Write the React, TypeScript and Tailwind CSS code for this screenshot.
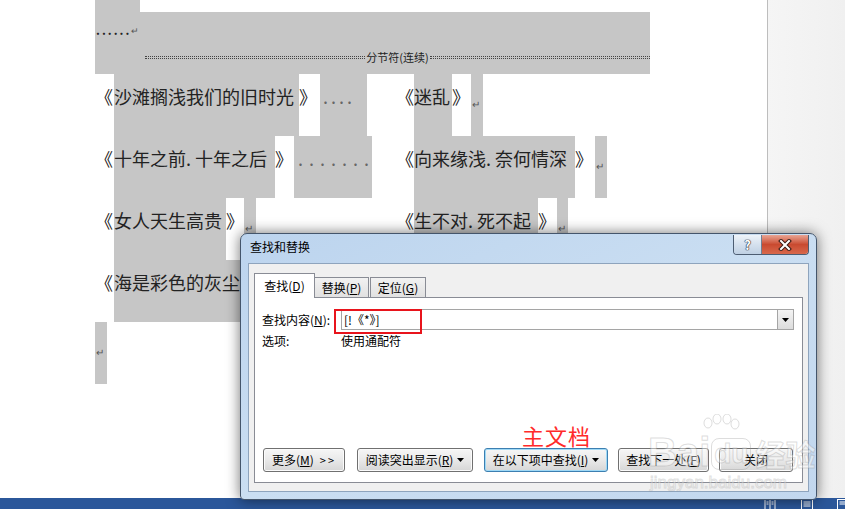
import React from "react";

const GRAY = "bg-[#c6c6c6]";

type Seg = { w: string; hl?: boolean; text?: React.ReactNode };

function Mark() {
  return <span className="ml-[1px] inline-block translate-y-[4px] text-[10px] text-[#555]">↵</span>;
}

function Row({ segs }: { segs: Seg[] }) {
  return (
    <div className="flex h-[62px] items-stretch">
      {segs.map((s, i) => (
        <div
          key={i}
          className={`shrink-0 whitespace-nowrap pt-[10px] leading-[24px] ${s.w} ${s.hl ? GRAY : ""}`}
        >
          {s.text}
        </div>
      ))}
    </div>
  );
}

const rows: Seg[][] = [
  [
    { w: "w-[19px]", text: "《" },
    { w: "w-[185px]", hl: true, text: "沙滩搁浅我们的旧时光" },
    { w: "w-[21px]", text: "》" },
    { w: "w-[47px]", hl: true, text: <span className="pl-[3px] tracking-[3px] text-[#666]">....</span> },
    { w: "w-[29px]" },
    { w: "w-[18px]", text: "《" },
    { w: "w-[38px]", hl: true, text: "迷乱" },
    { w: "w-[19px]", text: "》" },
    { w: "w-[12px]", hl: true, text: <Mark /> },
  ],
  [
    { w: "w-[19px]", text: "《" },
    { w: "w-[161px]", hl: true, text: "十年之前. 十年之后" },
    { w: "w-[19px]", text: "》" },
    { w: "w-[78px]", hl: true, text: <span className="pl-[4px] tracking-[6px] text-[#666]">.......</span> },
    { w: "w-[24px]" },
    { w: "w-[18px]", text: "《" },
    { w: "w-[161px]", hl: true, text: "向来缘浅. 奈何情深" },
    { w: "w-[20px]", text: "》" },
    { w: "w-[12px]", hl: true, text: <Mark /> },
  ],
  [
    { w: "w-[19px]", text: "《" },
    { w: "w-[112px]", hl: true, text: "女人天生高贵" },
    { w: "w-[18px]", text: "》" },
    { w: "w-[12px]", hl: true, text: <Mark /> },
    { w: "w-[140px]" },
    { w: "w-[18px]", text: "《" },
    { w: "w-[124px]", hl: true, text: "生不对. 死不起" },
    { w: "w-[19px]", text: "》" },
    { w: "w-[11px]", hl: true, text: <Mark /> },
  ],
  [
    { w: "w-[19px]", text: "《" },
    { w: "w-[290px]", hl: true, text: "海是彩色的灰尘" },
  ],
  [{ w: "w-[12px]", hl: true, text: <Mark /> }],
];

function WinButton({ w, focus, children }: { w: string; focus?: boolean; children: React.ReactNode }) {
  return (
    <div
      className={`flex h-[24px] shrink-0 items-center justify-center rounded-[3px] border bg-gradient-to-b from-[#f6f6f6] via-[#e9e9e9] to-[#d6d6d6] text-[12px] text-black ${w} ${
        focus ? "border-[#3c7fb1] shadow-[inset_0_0_0_1px_#9fd9f6]" : "border-[#707070] shadow-[inset_0_0_0_1px_#fbfbfb]"
      }`}
    >
      {children}
    </div>
  );
}

function Caret() {
  return (
    <svg width="7" height="4" viewBox="0 0 7 4" className="ml-[4px]">
      <path d="M0 0h7L3.5 4z" fill="#000" />
    </svg>
  );
}

export default function App() {
  return (
    <div className="relative flex h-[509px] w-[845px] flex-col overflow-hidden bg-white font-['Noto_Sans_CJK_SC','Noto_Sans',sans-serif]">
      <div className="flex flex-1">
        {/* document page */}
        <div className="flex w-[767px] flex-col pl-[95px] text-[18px] text-[#222]">
          <div className={`h-[12px] w-[45px] ${GRAY}`} />
          <div className={`flex h-[62px] w-[555px] flex-col ${GRAY}`}>
            <div className="mt-[11px] flex h-[14px] items-center text-[12px] leading-none">
              <span className="pl-[1px] font-bold tracking-[2px] text-[#222]">......</span>
              <span className="text-[9px] text-[#555]">↵</span>
            </div>
            <div className="mt-[13px] flex items-center pl-[50px]">
              <div className="h-[3px] flex-1 border-y border-dotted border-[#444]" />
              <span className="px-[1px] text-[11px] leading-[14px] text-[#222]">分节符(连续)</span>
              <div className="h-[3px] flex-1 border-y border-dotted border-[#444]" />
            </div>
          </div>
          {rows.map((r, i) => (
            <Row key={i} segs={r} />
          ))}
        </div>
        <div className="flex-1 border-l border-[#bdbdbd] bg-gradient-to-r from-[#f5f5f5] to-[#f0f0f0]" />
      </div>

      {/* status bar */}
      <div className="flex h-[11px] items-start justify-end gap-[24px] bg-[#2b579a]">
        <svg width="12" height="11" viewBox="0 0 12 11" className="mr-[1px]">
          <rect x="1" y="1.5" width="10" height="10" fill="none" stroke="#fff" />
          <path d="M6 1.5v10M2.5 4h2M2.5 6h2M7.5 4h2M7.5 6h2" stroke="#fff" />
        </svg>
        <svg width="12" height="11" viewBox="0 0 12 11">
          <rect x="0.5" y="1.5" width="11" height="10" fill="none" stroke="#fff" />
          <path d="M2.5 4h7M2.5 6h7M2.5 8h7" stroke="#fff" />
        </svg>
        <svg width="8" height="11" viewBox="0 0 8 11">
          <rect x="0.5" y="1.5" width="10" height="10" fill="none" stroke="#fff" />
          <path d="M2.5 4h6M2.5 6h6" stroke="#fff" />
        </svg>
      </div>

      {/* find & replace dialog */}
      <div className="absolute left-[240px] top-[233px] flex h-[267px] w-[577px] flex-col rounded-t-[7px] rounded-b-[4px] border border-[#44556b] bg-gradient-to-br from-[#bcd4ee] via-[#cadef2] to-[#c2d7ee] shadow-[0_0_14px_rgba(0,0,0,0.55)]">
        <div className="flex h-[29px] items-start justify-between pl-[9px] pr-[7px]">
          <span className="mt-[5px] text-[12px] leading-[16px] text-black">查找和替换</span>
          <div className="mt-[1px] flex overflow-hidden rounded-b-[4px] border border-t-0 border-[#4d5d72]">
            <div className="flex h-[19px] w-[28px] items-center justify-center border-r border-[#6f7f94] bg-gradient-to-b from-[#eef3f9] via-[#d5e1ee] to-[#bfd0e3]">
              <span className="text-[13px] font-bold leading-none text-white [text-shadow:0_0_1px_#223,0_0_1px_#223,0_0_1px_#223]">?</span>
            </div>
            <div className="flex h-[19px] w-[46px] items-center justify-center bg-gradient-to-b from-[#e8a493] via-[#c94a30] to-[#d8684c]">
              <svg width="14" height="12" viewBox="0 0 14 12">
                <path d="M3 2l8 8M11 2l-8 8" stroke="#3a1a14" strokeWidth="4" strokeLinecap="square" />
                <path d="M3 2l8 8M11 2l-8 8" stroke="#fff" strokeWidth="2" strokeLinecap="square" />
              </svg>
            </div>
          </div>
        </div>

        <div className="mx-[7px] mb-[7px] flex flex-1 flex-col border border-[#8ea4bd] bg-[#f0f0f0] px-[5px] pb-[8px] pt-[9px] text-[12px] text-black">
          {/* tabs */}
          <div className="relative z-10 flex h-[24px] items-end">
            <div className="mb-[-1px] flex h-[25px] w-[61px] items-start justify-center border border-b-0 border-[#898c95] bg-white pt-[3px]">
              查找(<u>D</u>)
            </div>
            <div className="flex h-[20px] w-[54px] items-center justify-center border border-b-0 border-l-0 border-[#898c95] bg-gradient-to-b from-[#f2f2f2] to-[#e1e1e1]">
              替换(<u>P</u>)
            </div>
            <div className="ml-[1px] flex h-[20px] w-[56px] items-center justify-center border border-b-0 border-[#898c95] bg-gradient-to-b from-[#f2f2f2] to-[#e1e1e1]">
              定位(<u>G</u>)
            </div>
          </div>

          {/* panel */}
          <div className="relative flex flex-1 flex-col border border-[#898c95] bg-white pb-[10px] pl-[7px] pr-[8px] pt-[11px]">
            <div className="relative flex h-[21px] items-center">
              <span className="w-[79px] shrink-0">
                查找内容(<u>N</u>):
              </span>
              <div className="flex h-[21px] flex-1 items-center border border-[#a5a5a5] pl-[2px]">
                <span className="flex-1">[!《*》]</span>
                <div className="flex h-[19px] w-[16px] items-center justify-center border-l border-[#a5a5a5] bg-gradient-to-b from-[#f4f4f4] to-[#dcdcdc]">
                  <svg width="7" height="4" viewBox="0 0 7 4">
                    <path d="M0 0h7L3.5 4z" fill="#000" />
                  </svg>
                </div>
              </div>
              <div className="absolute left-[72px] top-0 h-[25px] w-[88px] border-2 border-[#e8141c]" />
            </div>
            <div className="mt-[3px] flex h-[16px] items-center">
              <span className="w-[79px] shrink-0">选项:</span>
              <span>使用通配符</span>
            </div>

            <div className="flex-1" />

            <div className="flex items-center pl-[1px]">
              <WinButton w="w-[82px]">
                更多(<u>M</u>)<span className="ml-[6px] text-[11px] tracking-[2px]">&gt;&gt;</span>
              </WinButton>
              <div className="w-[12px] shrink-0" />
              <WinButton w="w-[116px]">
                阅读突出显示(<u>R</u>)
                <Caret />
              </WinButton>
              <div className="w-[11px] shrink-0" />
              <WinButton w="w-[124px]" focus>
                在以下项中查找(<u>I</u>)
                <Caret />
              </WinButton>
              <div className="w-[10px] shrink-0" />
              <WinButton w="w-[91px]">
                查找下一处(<u>F</u>)
              </WinButton>
              <div className="w-[10px] shrink-0" />
              <WinButton w="w-[74px]">关闭</WinButton>
            </div>

            <div className="absolute left-[267px] top-[124px] text-[22px] leading-[26px] tracking-[1px] text-[#ff2a2a]">
              主文档
            </div>
          </div>
        </div>
      </div>

      {/* watermark */}
      <div className="pointer-events-none absolute left-[648px] top-[414px] flex flex-col items-start font-['Liberation_Sans',sans-serif] opacity-70">
        <svg width="40" height="24" viewBox="0 0 40 24" className="ml-[52px]">
          <g fill="rgba(255,255,255,0.6)" stroke="rgba(150,150,150,0.45)">
            <ellipse cx="8" cy="9" rx="4" ry="5" />
            <ellipse cx="17" cy="5" rx="4" ry="5" />
            <ellipse cx="27" cy="5" rx="4" ry="5" />
            <ellipse cx="35" cy="10" rx="4" ry="5" />
          </g>
        </svg>
        <div className="-mt-[6px] flex items-end">
          <span className="text-[40px] font-bold leading-[40px] text-white/60 [-webkit-text-stroke:1px_rgba(150,150,150,0.45)]">Bai</span>
          <span className="mb-[2px] ml-[1px] rounded-[8px] border border-[rgba(150,150,150,0.45)] px-[2px] text-[28px] font-bold leading-[30px] text-white/60 [-webkit-text-stroke:1px_rgba(150,150,150,0.45)]">du</span>
          <span className="mb-[2px] ml-[4px] font-['Noto_Sans_CJK_SC',sans-serif] text-[30px] font-bold leading-[34px] text-white/60 [-webkit-text-stroke:1px_rgba(150,150,150,0.45)]">经验</span>
        </div>
        <span className="ml-[2px] mt-[2px] text-[17px] leading-[18px] text-white/60 [-webkit-text-stroke:1px_rgba(150,150,150,0.4)]">jingyan.baidu.com</span>
      </div>
    </div>
  );
}
